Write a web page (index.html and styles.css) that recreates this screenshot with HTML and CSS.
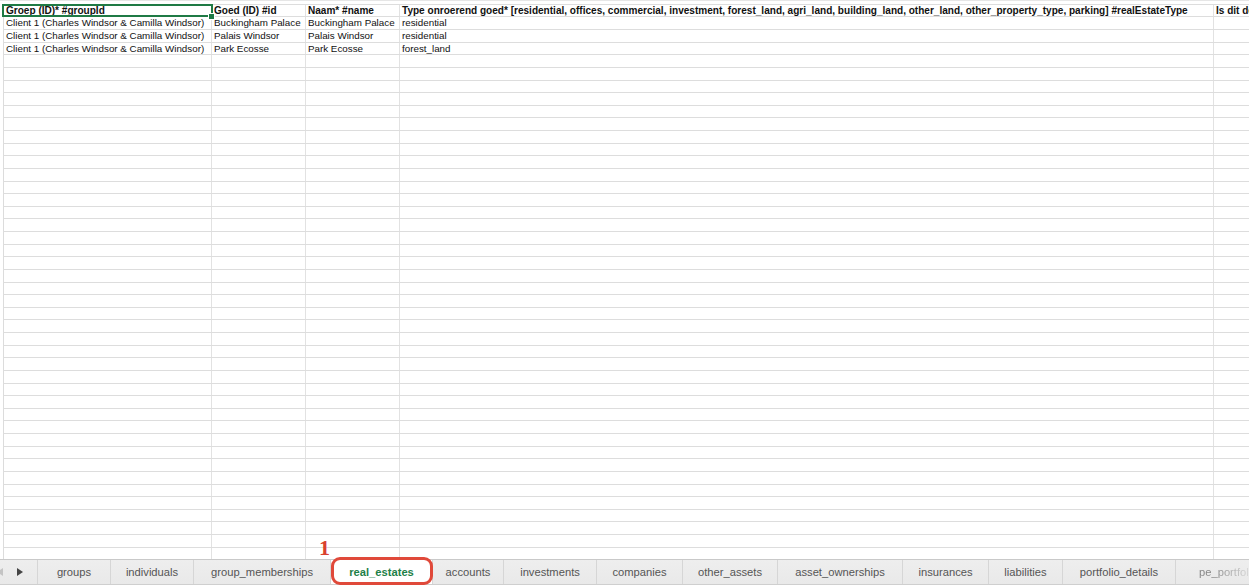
FILE: index.html
```html
<!DOCTYPE html>
<html>
<head>
<meta charset="utf-8">
<link rel="stylesheet" href="styles.css">
</head>
<body>
<div class="app">
  <div class="sheet">
    <div class="row head">
      <div class="c a selected">Groep (ID)* #groupId<span class="handle"></span></div>
      <div class="c b">Goed (ID) #id</div>
      <div class="c b">Naam* #name</div>
      <div class="c d">Type onroerend goed* [residential, offices, commercial, investment, forest_land, agri_land, building_land, other_land, other_property_type, parking] #realEstateType</div>
      <div class="c e">Is dit de hoofdverblijfplaats</div>
    </div>
    <div class="row"><div class="c a">Client 1 (Charles Windsor &amp; Camilla Windsor)</div><div class="c b">Buckingham Palace</div><div class="c b">Buckingham Palace</div><div class="c d">residential</div><div class="c e"></div></div>
    <div class="row"><div class="c a">Client 1 (Charles Windsor &amp; Camilla Windsor)</div><div class="c b">Palais Windsor</div><div class="c b">Palais Windsor</div><div class="c d">residential</div><div class="c e"></div></div>
    <div class="row"><div class="c a">Client 1 (Charles Windsor &amp; Camilla Windsor)</div><div class="c b">Park Ecosse</div><div class="c b">Park Ecosse</div><div class="c d">forest_land</div><div class="c e"></div></div>
    <div class="row"><div class="c a"></div><div class="c b"></div><div class="c b"></div><div class="c d"></div><div class="c e"></div></div>
    <div class="row"><div class="c a"></div><div class="c b"></div><div class="c b"></div><div class="c d"></div><div class="c e"></div></div>
    <div class="row"><div class="c a"></div><div class="c b"></div><div class="c b"></div><div class="c d"></div><div class="c e"></div></div>
    <div class="row"><div class="c a"></div><div class="c b"></div><div class="c b"></div><div class="c d"></div><div class="c e"></div></div>
    <div class="row"><div class="c a"></div><div class="c b"></div><div class="c b"></div><div class="c d"></div><div class="c e"></div></div>
    <div class="row"><div class="c a"></div><div class="c b"></div><div class="c b"></div><div class="c d"></div><div class="c e"></div></div>
    <div class="row"><div class="c a"></div><div class="c b"></div><div class="c b"></div><div class="c d"></div><div class="c e"></div></div>
    <div class="row"><div class="c a"></div><div class="c b"></div><div class="c b"></div><div class="c d"></div><div class="c e"></div></div>
    <div class="row"><div class="c a"></div><div class="c b"></div><div class="c b"></div><div class="c d"></div><div class="c e"></div></div>
    <div class="row"><div class="c a"></div><div class="c b"></div><div class="c b"></div><div class="c d"></div><div class="c e"></div></div>
    <div class="row"><div class="c a"></div><div class="c b"></div><div class="c b"></div><div class="c d"></div><div class="c e"></div></div>
    <div class="row"><div class="c a"></div><div class="c b"></div><div class="c b"></div><div class="c d"></div><div class="c e"></div></div>
    <div class="row"><div class="c a"></div><div class="c b"></div><div class="c b"></div><div class="c d"></div><div class="c e"></div></div>
    <div class="row"><div class="c a"></div><div class="c b"></div><div class="c b"></div><div class="c d"></div><div class="c e"></div></div>
    <div class="row"><div class="c a"></div><div class="c b"></div><div class="c b"></div><div class="c d"></div><div class="c e"></div></div>
    <div class="row"><div class="c a"></div><div class="c b"></div><div class="c b"></div><div class="c d"></div><div class="c e"></div></div>
    <div class="row"><div class="c a"></div><div class="c b"></div><div class="c b"></div><div class="c d"></div><div class="c e"></div></div>
    <div class="row"><div class="c a"></div><div class="c b"></div><div class="c b"></div><div class="c d"></div><div class="c e"></div></div>
    <div class="row"><div class="c a"></div><div class="c b"></div><div class="c b"></div><div class="c d"></div><div class="c e"></div></div>
    <div class="row"><div class="c a"></div><div class="c b"></div><div class="c b"></div><div class="c d"></div><div class="c e"></div></div>
    <div class="row"><div class="c a"></div><div class="c b"></div><div class="c b"></div><div class="c d"></div><div class="c e"></div></div>
    <div class="row"><div class="c a"></div><div class="c b"></div><div class="c b"></div><div class="c d"></div><div class="c e"></div></div>
    <div class="row"><div class="c a"></div><div class="c b"></div><div class="c b"></div><div class="c d"></div><div class="c e"></div></div>
    <div class="row"><div class="c a"></div><div class="c b"></div><div class="c b"></div><div class="c d"></div><div class="c e"></div></div>
    <div class="row"><div class="c a"></div><div class="c b"></div><div class="c b"></div><div class="c d"></div><div class="c e"></div></div>
    <div class="row"><div class="c a"></div><div class="c b"></div><div class="c b"></div><div class="c d"></div><div class="c e"></div></div>
    <div class="row"><div class="c a"></div><div class="c b"></div><div class="c b"></div><div class="c d"></div><div class="c e"></div></div>
    <div class="row"><div class="c a"></div><div class="c b"></div><div class="c b"></div><div class="c d"></div><div class="c e"></div></div>
    <div class="row"><div class="c a"></div><div class="c b"></div><div class="c b"></div><div class="c d"></div><div class="c e"></div></div>
    <div class="row"><div class="c a"></div><div class="c b"></div><div class="c b"></div><div class="c d"></div><div class="c e"></div></div>
    <div class="row"><div class="c a"></div><div class="c b"></div><div class="c b"></div><div class="c d"></div><div class="c e"></div></div>
    <div class="row"><div class="c a"></div><div class="c b"></div><div class="c b"></div><div class="c d"></div><div class="c e"></div></div>
    <div class="row"><div class="c a"></div><div class="c b"></div><div class="c b"></div><div class="c d"></div><div class="c e"></div></div>
    <div class="row"><div class="c a"></div><div class="c b"></div><div class="c b"></div><div class="c d"></div><div class="c e"></div></div>
    <div class="row"><div class="c a"></div><div class="c b"></div><div class="c b"></div><div class="c d"></div><div class="c e"></div></div>
    <div class="row"><div class="c a"></div><div class="c b"></div><div class="c b"></div><div class="c d"></div><div class="c e"></div></div>
    <div class="row"><div class="c a"></div><div class="c b"></div><div class="c b"></div><div class="c d"></div><div class="c e"></div></div>
    <div class="row"><div class="c a"></div><div class="c b"></div><div class="c b"></div><div class="c d"></div><div class="c e"></div></div>
    <div class="row"><div class="c a"></div><div class="c b"></div><div class="c b"></div><div class="c d"></div><div class="c e"></div></div>
    <div class="row"><div class="c a"></div><div class="c b"></div><div class="c b"></div><div class="c d"></div><div class="c e"></div></div>
    <div class="row"><div class="c a"></div><div class="c b"></div><div class="c b"></div><div class="c d"></div><div class="c e"></div></div>
  </div>
  <div class="tabbar">
    <div class="nav">
      <span class="nav-prev"></span>
      <span class="nav-next"></span>
    </div>
    <div class="tab t-groups">groups</div>
    <div class="tab t-individuals">individuals</div>
    <div class="tab t-memberships">group_memberships</div>
    <div class="tab t-real active">real_estates<span class="marker">1</span></div>
    <div class="tab t-accounts">accounts</div>
    <div class="tab t-investments">investments</div>
    <div class="tab t-companies">companies</div>
    <div class="tab t-other">other_assets</div>
    <div class="tab t-ownerships">asset_ownerships</div>
    <div class="tab t-insurances">insurances</div>
    <div class="tab t-liabilities">liabilities</div>
    <div class="tab t-portfolio">portfolio_details</div>
    <div class="tab t-pe fade">pe_portfolio</div>
  </div>
</div>
</body>
</html>
```
FILE: styles.css
```css
html, body {
  margin: 0;
  padding: 0;
  background: #ffffff;
  overflow: hidden;
}
.app {
  width: 1249px;
  height: 585px;
  display: flex;
  flex-direction: column;
  font-family: "Liberation Sans", Arial, sans-serif;
  color: #111;
}
.sheet {
  height: 559px;
  overflow: hidden;
  padding-top: 3px;
  padding-left: 3px;
  box-sizing: border-box;
  background: #fff;
  border-top: 1px solid #e6e6e6;
}
.row {
  display: flex;
  height: 12.63px;
  box-sizing: border-box;
  border-bottom: 1px solid #dddddd;
}
.row.head {
  border-top: 1px solid #dddddd;
  height: 13.4px;
  font-weight: bold;
}
.c {
  flex: none;
  box-sizing: border-box;
  border-right: 1px solid #e2e2e2;
  padding-left: 2px;
  font-size: 9.8px;
  line-height: 11.6px;
  white-space: nowrap;
  overflow: hidden;
}
.row.head .c {
  font-size: 10.05px;
  line-height: 12.2px;
  overflow: visible;
}
.c.a {
  width: 209px;
  border-left: 1px solid #dcdcdc;
}
.c.b { width: 94px; }
.c.d { width: 814px; }
.c.e { width: 200px; }
.c.selected {
  position: relative;
  outline: 2px solid #1f7a45;
  outline-offset: -1px;
}
.handle {
  position: absolute;
  right: -4px;
  bottom: -4px;
  width: 5px;
  height: 5px;
  background: #1f7a45;
  border: 1px solid #fff;
}
.tabbar {
  height: 26px;
  flex: none;
  display: flex;
  align-items: stretch;
  background: linear-gradient(#eeeeee, #e9e9e9);
  border-top: 1px solid #c9c9c9;
  border-bottom: 1px solid #cfcfcf;
  box-sizing: border-box;
  font-size: 11.2px;
  color: #555;
}
.nav {
  width: 37px;
  flex: none;
  position: relative;
}
.nav-prev {
  position: absolute;
  left: -3px;
  top: 8px;
  width: 0;
  height: 0;
  border-top: 4px solid transparent;
  border-bottom: 4px solid transparent;
  border-right: 6px solid #c4c4c4;
}
.nav-next {
  position: absolute;
  left: 17px;
  top: 8px;
  width: 0;
  height: 0;
  border-top: 4.5px solid transparent;
  border-bottom: 4.5px solid transparent;
  border-left: 6px solid #444;
}
.tab {
  flex: none;
  display: flex;
  align-items: center;
  justify-content: center;
  box-sizing: border-box;
  padding-bottom: 1px;
  border-left: 1px solid #d6d6d6;
  white-space: nowrap;
}
.t-groups { width: 73px; }
.t-individuals { width: 83px; }
.t-memberships { width: 137px; }
.t-real { width: 102px; }
.t-accounts { width: 71px; }
.t-investments { width: 93px; }
.t-companies { width: 86px; }
.t-other { width: 95px; }
.t-ownerships { width: 125px; }
.t-insurances { width: 86px; }
.t-liabilities { width: 74px; }
.t-portfolio { width: 113px; }
.t-pe {
  flex: 1 0 auto;
  justify-content: flex-start;
  padding-left: 23px;
}
.tab.active {
  position: relative;
  background: #fff;
  color: #1e8048;
  font-weight: bold;
}
.tab.active::after {
  content: "";
  position: absolute;
  left: 0;
  right: -1px;
  top: -3px;
  bottom: -1px;
  border: 3px solid #e0493a;
  border-radius: 9px;
}
.marker {
  position: absolute;
  left: -12px;
  top: -25px;
  font-family: "Liberation Serif", "Times New Roman", serif;
  font-weight: bold;
  font-size: 22px;
  color: #d9412f;
}
.tab.fade {
  color: #888;
  -webkit-mask-image: linear-gradient(to right, #000 45%, transparent 100%);
  mask-image: linear-gradient(to right, #000 45%, transparent 100%);
}
```
